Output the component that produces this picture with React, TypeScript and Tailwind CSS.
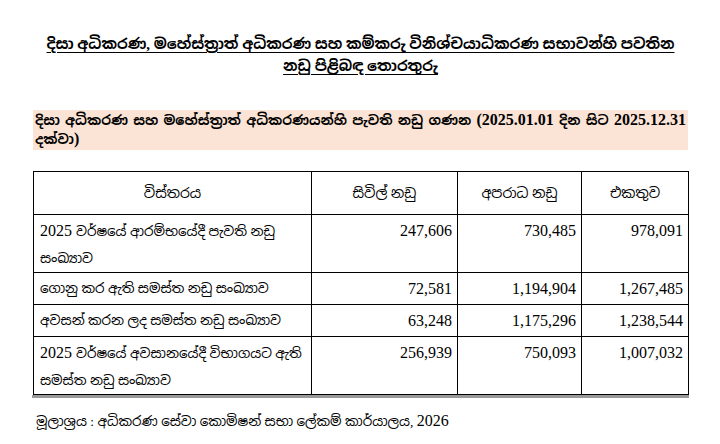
const rows = [
  {
    label: [["2025", "වර්ෂයේ ආරම්භයේදී පැවති නඩු"], ["", "සංඛ්‍යාව"]],
    civil: "247,606",
    criminal: "730,485",
    total: "978,091",
  },
  {
    label: [["", "ගොනු කර ඇති  සමස්ත නඩු සංඛ්‍යාව"]],
    civil: "72,581",
    criminal: "1,194,904",
    total: "1,267,485",
  },
  {
    label: [["", "අවසන් කරන ලද සමස්ත නඩු සංඛ්‍යාව"]],
    civil: "63,248",
    criminal: "1,175,296",
    total: "1,238,544",
  },
  {
    label: [["2025", "වර්ෂයේ අවසානයේදී විභාගයට ඇති"], ["", "සමස්ත නඩු සංඛ්‍යාව"]],
    civil: "256,939",
    criminal: "750,093",
    total: "1,007,032",
  },
];

const font =
  "font-['Liberation_Serif','Noto_Sans_Sinhala','Noto_Serif_Sinhala','Noto_Sans',serif]";

function Num({ children }: { children: React.ReactNode }) {
  return <span className="text-[16px]">{children}</span>;
}

export default function App() {
  return (
    <div className={`h-[444px] w-[720px] overflow-hidden bg-white text-black ${font}`}>
      <div className="ml-[33px] w-[655px] pt-[33px]">
        {/* Heading */}
        <h1 className="whitespace-nowrap text-center text-[14.8px] font-bold leading-[22px] underline underline-offset-[3px]">
          දිසා අධිකරණ, මහේස්ත්‍රාත් අධිකරණ සහ කම්කරු විනිශ්චයාධිකරණ සභාවන්හි පවතින
          <br />
          නඩු පිළිබඳ තොරතුරු
        </h1>

        {/* Shaded caption */}
        <div className="mt-[33px] bg-[#fbe4d5] px-[2px] py-[1px] text-[13.5px] font-bold leading-[18px]">
          <p className="whitespace-nowrap text-justify [text-align-last:justify]">
            දිසා අධිකරණ සහ මහේස්ත්‍රාත් අධිකරණයන්හි පැවති නඩු ගණන <Num>(2025.01.01</Num> දින සිට{" "}
            <Num>2025.12.31</Num>
          </p>
          <p>
            දක්වා<Num>)</Num>
          </p>
        </div>

        {/* Table */}
        <table className="mt-[21px] w-[655px] table-fixed border-collapse text-[16px]">
          <colgroup>
            <col className="w-[278px]" />
            <col className="w-[146px]" />
            <col className="w-[124px]" />
            <col className="w-[107px]" />
          </colgroup>
          <thead>
            <tr className="h-[43px]">
              <th className="border border-black text-center text-[14px] font-normal">විස්තරය</th>
              <th className="border border-black text-center text-[14px] font-normal">සිවිල් නඩු</th>
              <th className="border border-black text-center text-[14px] font-normal">අපරාධ නඩු</th>
              <th className="border border-black text-center text-[14px] font-normal">එකතුව</th>
            </tr>
          </thead>
          <tbody>
            {rows.map((r, i) => (
              <tr key={i} className={r.label.length > 1 ? "h-[56px]" : "h-[32px]"}>
                <td className="border border-black px-[6px] pt-[2px] align-top text-[13.5px] leading-[27px]">
                  {r.label.map(([n, t], j) => (
                    <div key={j} className="whitespace-nowrap">
                      {n && <Num>{n} </Num>}
                      {t}
                    </div>
                  ))}
                </td>
                <td className="border border-black px-[5px] pt-[2px] text-right align-top leading-[27px]">
                  {r.civil}
                </td>
                <td className="border border-black px-[5px] pt-[2px] text-right align-top leading-[27px]">
                  {r.criminal}
                </td>
                <td className="border border-black px-[5px] pt-[2px] text-right align-top leading-[27px]">
                  {r.total}
                </td>
              </tr>
            ))}
          </tbody>
        </table>
        <div className="-ml-[1px] h-[3px] w-[657px] bg-[#999999]" />

        {/* Source */}
        <p className="mt-[13px] pl-[3px] text-[13.5px] leading-[20px]">
          මූලාශ්‍රය : අධිකරණ සේවා කොමිෂන් සභා ලේකම් කාර්යාලය, <Num>2026</Num>
        </p>
      </div>
    </div>
  );
}
